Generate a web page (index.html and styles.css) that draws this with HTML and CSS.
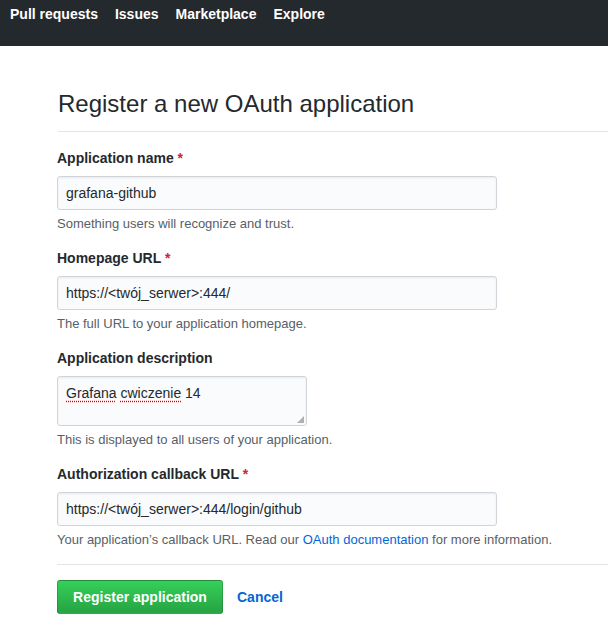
FILE: index.html
```html
<!DOCTYPE html>
<html>
<head>
<meta charset="utf-8">
<link rel="stylesheet" href="styles.css">
</head>
<body>
<header class="topbar">
  <nav class="nav">
    <a class="nav-item">Pull requests</a>
    <a class="nav-item">Issues</a>
    <a class="nav-item">Marketplace</a>
    <a class="nav-item">Explore</a>
  </nav>
</header>
<main class="container">
  <h1 class="title">Register a new OAuth application</h1>
  <form class="form">
    <div class="group">
      <label class="label">Application name <span class="req">*</span></label>
      <div class="input">grafana-github</div>
      <p class="note">Something users will recognize and trust.</p>
    </div>
    <div class="group">
      <label class="label">Homepage URL <span class="req">*</span></label>
      <div class="input">https://&lt;twój_serwer&gt;:444/</div>
      <p class="note">The full URL to your application homepage.</p>
    </div>
    <div class="group">
      <label class="label">Application description</label>
      <div class="input textarea"><span class="spell">Grafana</span> <span class="spell">cwiczenie</span> 14<span class="grip"></span></div>
      <p class="note">This is displayed to all users of your application.</p>
    </div>
    <div class="group">
      <label class="label">Authorization callback URL <span class="req">*</span></label>
      <div class="input">https://&lt;twój_serwer&gt;:444/login/github</div>
      <p class="note">Your application’s callback URL. Read our <a class="link">OAuth documentation</a> for more information.</p>
    </div>
    <hr class="divider">
    <div class="actions">
      <button type="button" class="btn">Register application</button>
      <a class="cancel">Cancel</a>
    </div>
  </form>
</main>
</body>
</html>
```
FILE: styles.css
```css
* { box-sizing: border-box; }
body {
  margin: 0;
  font-family: "Liberation Sans", Arial, sans-serif;
  font-size: 14px;
  color: #24292e;
  background: #fff;
  overflow: hidden;
}
.topbar {
  background: #24292e;
  height: 46px;
  padding: 4px 0 0 10px;
}
.nav {
  display: flex;
  gap: 17px;
}
.nav-item {
  color: #fff;
  font-weight: bold;
  font-size: 14px;
  line-height: 20px;
}
.container {
  padding: 43px 0 0 57px;
}
.title {
  margin: 0;
  font-weight: normal;
  font-size: 24px;
  line-height: 30px;
  padding-bottom: 12px;
  margin-left: 1px;
  border-bottom: 1px solid #e1e4e8;
  color: #24292e;
}
.form { padding-top: 16px; }
.group { margin-bottom: 15px; }
.label {
  display: block;
  font-weight: bold;
  font-size: 14px;
  line-height: 20px;
  margin-bottom: 8px;
}
.req { color: #cb2431; }
.input {
  width: 440px;
  height: 34px;
  padding: 6px 8px;
  font-size: 14px;
  line-height: 20px;
  background: #fafbfc;
  border: 1px solid #d1d5da;
  border-radius: 3px;
  box-shadow: inset 0 1px 2px rgba(27,31,35,0.075);
  color: #24292e;
}
.textarea {
  width: 250px;
  height: 50px;
  position: relative;
}
.spell {
  text-decoration: underline dotted #e00;
  text-underline-offset: 3px;
}
.grip {
  position: absolute;
  right: 2px;
  bottom: 2px;
  width: 7px;
  height: 7px;
  background:
    radial-gradient(circle, #aaa 0.7px, transparent 0.8px) 0 0 / 2px 2px;
  clip-path: polygon(100% 0, 100% 100%, 0 100%);
}
.note {
  margin: 5px 0 0;
  font-size: 13px;
  line-height: 18px;
  color: #586069;
}
.link { color: #0366d6; }
.divider {
  border: 0;
  border-top: 1px solid #e1e4e8;
  margin: 1px 0 15px;
}
.actions {
  display: flex;
  align-items: center;
  gap: 14px;
}
.btn {
  width: 166px;
  height: 34px;
  font-family: inherit;
  font-weight: bold;
  font-size: 14px;
  color: #fff;
  background: linear-gradient(#34d058, #28a745 90%);
  border: 1px solid rgba(27,31,35,0.2);
  border-radius: 3px;
  padding: 0;
}
.cancel {
  color: #0366d6;
  font-weight: bold;
  font-size: 14px;
}
```
